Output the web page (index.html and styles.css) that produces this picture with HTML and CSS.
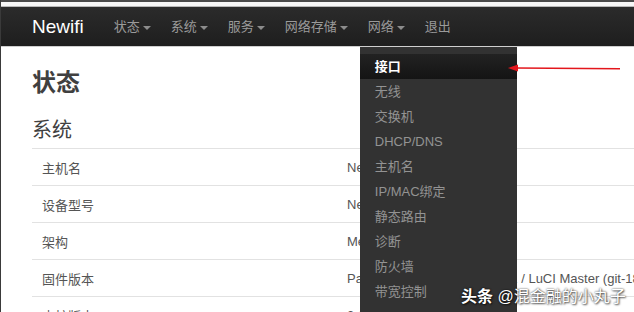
FILE: index.html
```html
<!DOCTYPE html>
<html lang="zh-CN">
<head>
  <meta charset="UTF-8" />
  <meta name="viewport" content="width=device-width, initial-scale=1.0"/>
  <title>Newifi - 状态</title>
  <link rel="stylesheet" href="styles.css">
</head>
<body>

  <div class="topstrip"></div>
  <div class="whiteline"></div>

  <div class="navbar">
    <a class="brand" href="#">Newifi</a>
    <ul class="nav">
      <li>状态<span class="caret"></span></li>
      <li>系统<span class="caret"></span></li>
      <li>服务<span class="caret"></span></li>
      <li>网络存储<span class="caret"></span></li>
      <li class="open">网络<span class="caret"></span>
        <ul class="dropdown">
          <li class="active">接口</li>
          <li>无线</li>
          <li>交换机</li>
          <li>DHCP/DNS</li>
          <li>主机名</li>
          <li>IP/MAC绑定</li>
          <li>静态路由</li>
          <li>诊断</li>
          <li>防火墙</li>
          <li>带宽控制</li>
        </ul>
      </li>
      <li>退出</li>
    </ul>
  </div>

  <div class="main">
    <h1>状态</h1>
    <h2>系统</h2>
    <table>
      <tr><td class="label">主机名</td><td>Newifi-D2</td></tr>
      <tr><td class="label">设备型号</td><td>Newifi-D2</td></tr>
      <tr><td class="label">架构</td><td>MediaTek MT7621</td></tr>
      <tr><td class="label">固件版本</td><td>PandoraBox 19.01 2019-02-1 / LuCI Master (git-18.228.31946-f64b152)</td></tr>
      <tr><td class="label">内核版本</td><td>3.14.79</td></tr>
    </table>
  </div>

  <!-- 红色箭头标注 -->
  <svg class="arrow" width="116" height="12" viewBox="0 0 116 12">
    <line x1="10" y1="6" x2="114" y2="6.8" stroke="#e3161c" stroke-width="1.6"/>
    <polygon points="2,6 12,2.5 12,9.5" fill="#e3161c"/>
  </svg>

  <div class="watermark"><b>头条</b> @混金融的小丸子</div>

</body>
</html>
```

FILE: styles.css
```css
body {
  margin: 0;
  padding: 0;
  overflow: hidden;
  height: 312px;
  border-left: 1px solid #3a3a3a;
  background: #fff;
  font-family: "Liberation Sans", "Noto Sans CJK SC", sans-serif;
  color: #555;
  position: relative;
}

.topstrip {
  height: 2px;
  background-color: #4a4a4a;
}

.whiteline {
  height: 4px;
  background-color: #f6f6f6;
  border-bottom: 1px solid #b8b8b8;
}

.navbar {
  height: 39px;
  display: flex;
  align-items: center;
  padding-left: 31px;
  background: linear-gradient(#2b2b2b, #1e1e1e);
  border-bottom: 1px solid #cfcfcf;
}

.brand {
  font-size: 19px;
  color: #fff;
  text-decoration: none;
  margin-right: 20px;
}

.nav {
  display: flex;
  list-style: none;
  margin: 0;
  padding: 0;
  height: 39px;
}

.nav > li {
  position: relative;
  padding: 0 10px;
  line-height: 39px;
  font-size: 13px;
  color: #9a9a9a;
}

.caret {
  display: inline-block;
  width: 0;
  height: 0;
  margin-left: 3px;
  vertical-align: middle;
  border-top: 4px solid #8c8c8c;
  border-left: 4px solid transparent;
  border-right: 4px solid transparent;
}

.dropdown {
  position: absolute;
  top: 40px;
  left: 2px;
  width: 157px;
  height: 280px;
  margin: 0;
  padding: 7px 0 0;
  list-style: none;
  background-color: #323232;
  z-index: 5;
}

.dropdown li {
  height: 25px;
  line-height: 25px;
  padding: 0 15px;
  font-size: 13px;
  color: #939393;
  white-space: nowrap;
}

.dropdown li.active {
  background: linear-gradient(#222, #141414);
  color: #fff;
  font-weight: bold;
}

.main {
  padding-left: 31px;
}

h1 {
  margin: 21px 0 0;
  font-size: 24px;
  line-height: 30px;
  font-weight: bold;
  color: #404040;
}

h2 {
  margin: 19px 0 5px;
  font-size: 20px;
  line-height: 26px;
  font-weight: normal;
  color: #404040;
}

table {
  border-collapse: collapse;
  table-layout: fixed;
  width: 700px;
  font-size: 13px;
}

td {
  height: 36px;
  padding: 0;
  border-top: 1px solid #e2e2e2;
  white-space: nowrap;
  overflow: hidden;
  color: #555;
}

td.label {
  width: 305px;
  padding-left: 10px;
}

.arrow {
  position: absolute;
  left: 505px;
  top: 62px;
  z-index: 6;
}

.watermark {
  position: absolute;
  left: 460px;
  top: 283px;
  font-size: 16px;
  color: #fff;
  white-space: nowrap;
  text-shadow: 0 0 2px rgba(0, 0, 0, 0.8), 1px 1px 2px rgba(0, 0, 0, 0.6);
  z-index: 7;
}
```
